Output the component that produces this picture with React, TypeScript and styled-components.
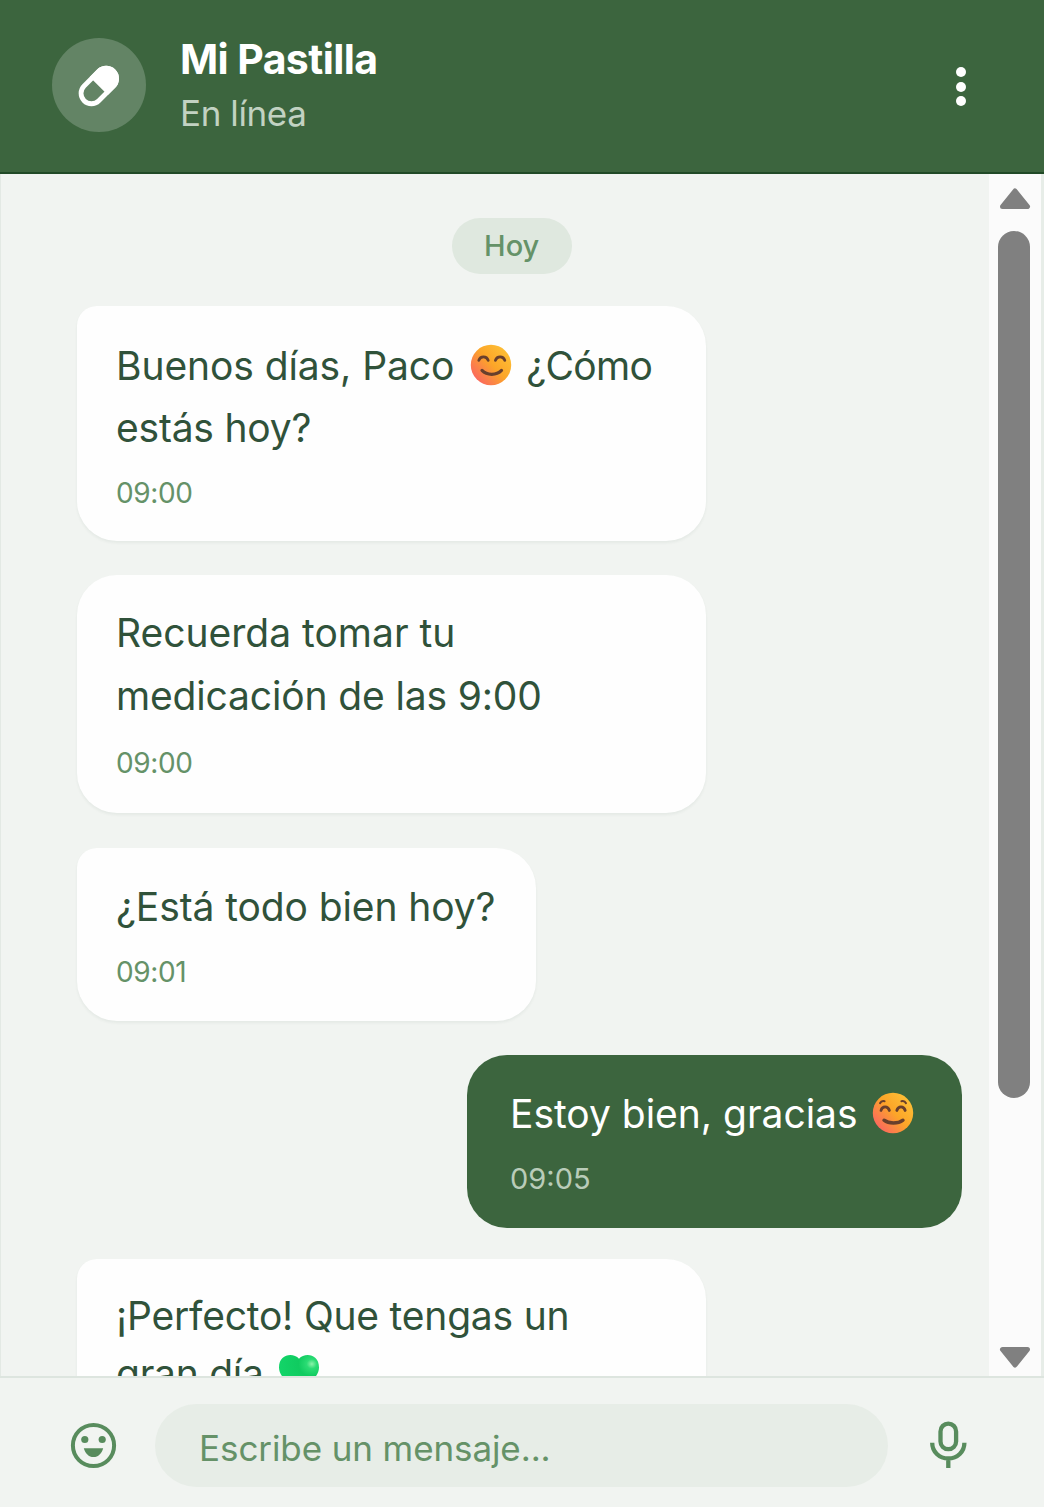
import React from "react";
import styled, { createGlobalStyle } from "styled-components";

const Global = createGlobalStyle`
  * { box-sizing: border-box; }
  body { margin: 0; background: #f1f4f1; font-family: Inter, "Liberation Sans", sans-serif; }
`;

const Screen = styled.div`
  width: 1044px;
  height: 1507px;
  display: flex;
  flex-direction: column;
  overflow: hidden;
  background: #f1f4f1;
`;

const Header = styled.header`
  height: 174px;
  flex: none;
  display: flex;
  align-items: flex-start;
  padding: 38px 78px 0 52px;
  background: #3c653e;
  border-bottom: 2px solid #214a27;
`;

const Avatar = styled.div`
  width: 94px;
  height: 94px;
  border-radius: 50%;
  background: #638465;
  margin-right: 34px;
  svg { display: block; }
`;

const Identity = styled.div`
  flex: 1;
  display: flex;
  flex-direction: column;
`;

const Name = styled.h1`
  margin: -4px 0 0;
  font-size: 41px;
  line-height: 50px;
  font-weight: 700;
  letter-spacing: -0.6px;
  color: #fff;
  white-space: nowrap;
`;

const Status = styled.span`
  margin-top: 8px;
  font-size: 35px;
  line-height: 42px;
  letter-spacing: -0.4px;
  color: #c2d2c2;
`;

const MenuButton = styled.button`
  margin-top: 29px;
  padding: 0;
  border: 0;
  background: none;
  display: flex;
  flex-direction: column;
  gap: 4.4px;
`;

const Dot = styled.i`
  width: 10.2px;
  height: 10.2px;
  border-radius: 50%;
  background: #fff;
`;

const Body = styled.main`
  flex: none;
  height: 1202px;
  display: flex;
  overflow: hidden;
  border-left: 1px solid #e3e9e4;
`;

const Messages = styled.section`
  flex: 1;
  height: 100%;
  overflow: hidden;
  display: flex;
  flex-direction: column;
  align-items: flex-start;
  padding: 44px 27px 0 76.4px;
`;

const DayBadge = styled.div`
  align-self: center;
  margin: 0 16px 31.5px 0;
  width: 120px;
  height: 56px;
  flex: none;
  border-radius: 28px;
  background: #dfe8df;
  color: #659268;
  font-size: 29px;
  font-weight: 500;
  line-height: 56px;
  text-align: center;
`;

const Bubble = styled.article<{ $w: number; $h: number; $gap: number; $own?: boolean; $tl?: number; $top: number }>`
  flex: none;
  width: ${(p) => p.$w}px;
  height: ${(p) => p.$h}px;
  margin-bottom: ${(p) => p.$gap}px;
  align-self: ${(p) => (p.$own ? "flex-end" : "flex-start")};
  padding: ${(p) => p.$top}px 0 0 ${(p) => (p.$own ? 43 : 38.6)}px;
  border-radius: ${(p) => p.$tl ?? 40}px 40px 40px 40px;
  background: ${(p) => (p.$own ? "#3c653e" : "#fefefe")};
  color: ${(p) => (p.$own ? "#fff" : "#30523a")};
  box-shadow: ${(p) => (p.$own ? "none" : "0 2px 3px rgba(40, 70, 45, 0.06)")};
`;

const Line = styled.p<{ $lh?: number; $ls?: number }>`
  margin: 0;
  height: ${(p) => p.$lh ?? 62}px;
  line-height: ${(p) => p.$lh ?? 62}px;
  font-size: 39px;
  letter-spacing: ${(p) => p.$ls ?? 0}px;
  white-space: nowrap;
`;

const Tight = styled.span`
  letter-spacing: -0.7px;
`;

const Time = styled.time<{ $own?: boolean; $mt?: number }>`
  display: block;
  margin-top: ${(p) => p.$mt ?? 14}px;
  font-size: ${(p) => (p.$own ? 29 : 28)}px;
  line-height: 40px;
  letter-spacing: ${(p) => (p.$own ? 0 : -0.4)}px;
  color: ${(p) => (p.$own ? "#b9ccb9" : "#659268")};
`;

const EmojiSvg = styled.svg<{ $ml: number; $mr?: number; $drop?: number }>`
  display: inline-block;
  width: 42px;
  height: 42px;
  margin: 0 ${(p) => p.$mr ?? 0}px 0 ${(p) => p.$ml}px;
  vertical-align: ${(p) => p.$drop ?? -6}px;
`;

const Scrollbar = styled.aside`
  width: 55px;
  flex: none;
  display: flex;
  flex-direction: column;
  align-items: center;
  padding: 13px 2px 7px 0;
  background: #fbfbfb;
  border-right: 3px solid #e7ede8;
`;

const Thumb = styled.div`
  width: 32px;
  height: 867px;
  margin-top: 21px;
  border-radius: 16px;
  background: #808080;
`;

const Arrow = styled.svg<{ $end?: boolean }>`
  width: 32px;
  height: 23px;
  flex: none;
  margin: ${(p) => (p.$end ? "auto" : "0")} 0 0 1px;
  transform: ${(p) => (p.$end ? "rotate(180deg)" : "none")};
`;

const Composer = styled.footer`
  flex: none;
  height: 131px;
  display: flex;
  align-items: center;
  padding: 6px 0 0 69px;
  border-top: 2px solid #dde5df;
  background: #f1f4f1;
`;

const Field = styled.div`
  flex: none;
  width: 733px;
  height: 83px;
  margin: 0 36px 0 36.6px;
  padding-left: 44.5px;
  border-radius: 42px;
  background: #e7ede7;
  color: #659268;
  font-size: 35px;
  line-height: 88px;
  letter-spacing: -0.1px;
`;

const Icon = styled.svg`
  display: block;
  flex: none;
`;

function Smile({ id, own, ml, mr }: { id: string; own?: boolean; ml: number; mr?: number }) {
  return (
    <EmojiSvg viewBox="0 0 42 42" $ml={ml} $mr={mr}>
      <defs>
        <linearGradient id={id} x1="0.08" y1="0.85" x2="0.85" y2="0.15">
          <stop offset="0" stopColor="#fb6560" />
          <stop offset="0.3" stopColor="#fb8744" />
          <stop offset="0.55" stopColor="#fca528" />
          <stop offset="1" stopColor="#fdbd35" />
        </linearGradient>
      </defs>
      <circle cx="21" cy="21" r="20.2" fill={`url(#${id})`} />
      <g fill="none" stroke="#693f2c" strokeWidth="2.8" strokeLinecap="round">
        {own ? (
          <>
            <path d="M9 18.5c1.2-4.8 7-4.8 8.4 0M24.8 18.5c1.4-4.8 7-4.8 8.4 0" />
            <path d="M8 11.2c.9-1.8 2.6-2.4 4.6-1.9M34 11.2c-.9-1.8-2.6-2.4-4.6-1.9" strokeWidth="2" />
            <path d="M12 28.2c4.8 3.8 14 3.8 19 0" strokeWidth="3.4" />
          </>
        ) : (
          <>
            <path d="M8.800 16.400c1.600-4.600 7.800-4.600 9.400 0M25.400 16.400c1.600-4.600 7.800-4.600 9.400 0" />
            <path d="M12 26.4c5 5.200 14.500 5.200 19.500 0" strokeWidth="3.200" />
          </>
        )}
      </g>
    </EmojiSvg>
  );
}

function Heart() {
  return (
    <EmojiSvg viewBox="0 0 42 42" $ml={14.5} $drop={-8}>
      <defs>
        <radialGradient id="heart" cx="0.82" cy="0.24" r="0.8">
          <stop offset="0" stopColor="#8df2aa" />
          <stop offset="0.16" stopColor="#2bdc74" />
          <stop offset="0.42" stopColor="#10cb60" />
          <stop offset="1" stopColor="#12d468" />
        </radialGradient>
      </defs>
      <path d="M21 4.8C15-1.8 1 0 1 13.5 1 24 14 31 21 38c7-7 20-14 20-24.500C41 0 27-1.800 21 4.800z" fill="url(#heart)" />
    </EmojiSvg>
  );
}

export default function App() {
  return (
    <Screen>
      <Global />
      <Header>
        <Avatar>
          <svg width="94" height="94" viewBox="0 0 94 94">
            <g transform="translate(46.8 48) rotate(-45)">
              <rect x="-20.8" y="-10.4" width="41.6" height="20.8" rx="10.4" fill="none" stroke="#fff" strokeWidth="4.8" />
              <path d="M0-12.8h10.4a12.8 12.8 0 0 1 0 25.6H0z" fill="#fff" />
            </g>
          </svg>
        </Avatar>
        <Identity>
          <Name>Mi Pastilla</Name>
          <Status>En línea</Status>
        </Identity>
        <MenuButton aria-label="Menú">
          <Dot />
          <Dot />
          <Dot />
        </MenuButton>
      </Header>
      <Body>
        <Messages>
          <DayBadge>Hoy</DayBadge>
          <Bubble $w={628.4} $h={235} $gap={34} $tl={20} $top={29}>
            <Line $ls={-0.09}>Buenos días, Paco<Smile id="face-a" ml={15.5} mr={14.5} /><Tight>¿Cómo</Tight></Line>
            <Line $ls={-0.2}>estás hoy?</Line>
            <Time>09:00</Time>
          </Bubble>
          <Bubble $w={628.4} $h={238} $gap={35} $top={26}>
            <Line $lh={63}>Recuerda tomar tu</Line>
            <Line $lh={63} $ls={-0.15}>medicación de las 9:00</Line>
            <Time $mt={16}>09:00</Time>
          </Bubble>
          <Bubble $w={459} $h={173} $gap={34} $tl={20} $top={28}>
            <Line $ls={-0.1}>¿Está todo bien hoy?</Line>
            <Time>09:01</Time>
          </Bubble>
          <Bubble $w={495} $h={173} $gap={31} $top={28} $own>
            <Line $ls={-0.02}>Estoy bien, gracias<Smile id="face-b" own ml={14.5} /></Line>
            <Time $own>09:05</Time>
          </Bubble>
          <Bubble $w={628.4} $h={235} $gap={0} $tl={20} $top={26.5}>
            <Line $ls={-0.21}>¡Perfecto! Que tengas un</Line>
            <Line $lh={53} $ls={-0.25}>gran día<Heart /></Line>
          </Bubble>
        </Messages>
        <Scrollbar>
          <Arrow viewBox="0 0 32 23">
            <path d="M16 4L28.5 19.5h-25z" fill="#808080" stroke="#808080" strokeWidth="5" strokeLinejoin="round" />
          </Arrow>
          <Thumb />
          <Arrow viewBox="0 0 32 23" $end>
            <path d="M16 4L28.5 19.5h-25z" fill="#808080" stroke="#808080" strokeWidth="5" strokeLinejoin="round" />
          </Arrow>
        </Scrollbar>
      </Body>
      <Composer>
        <Icon width="49" height="49" viewBox="0 0 49 49">
          <circle cx="24.5" cy="24.5" r="20.6" fill="none" stroke="#588c5d" strokeWidth="4" />
          <circle cx="15.8" cy="18.5" r="3.6" fill="#588c5d" />
          <circle cx="33.2" cy="18.5" r="3.6" fill="#588c5d" />
          <path d="M14.8 27.3h19.4c-1.3 5.2-5 8.8-9.7 8.8s-8.4-3.6-9.7-8.8z" fill="#588c5d" />
        </Icon>
        <Field>Escribe un mensaje...</Field>
        <Icon width="48" height="49" viewBox="0 0 48 49" fill="none" stroke="#588c5d" strokeWidth="4.3">
          <rect x="16.5" y="2.6" width="15.6" height="25.6" rx="7.8" />
          <path d="M8.2 21.7c0 9 7 15.7 16.1 15.7s16.1-6.7 16.1-15.7M24.3 37.4v9.5" />
        </Icon>
      </Composer>
    </Screen>
  );
}
